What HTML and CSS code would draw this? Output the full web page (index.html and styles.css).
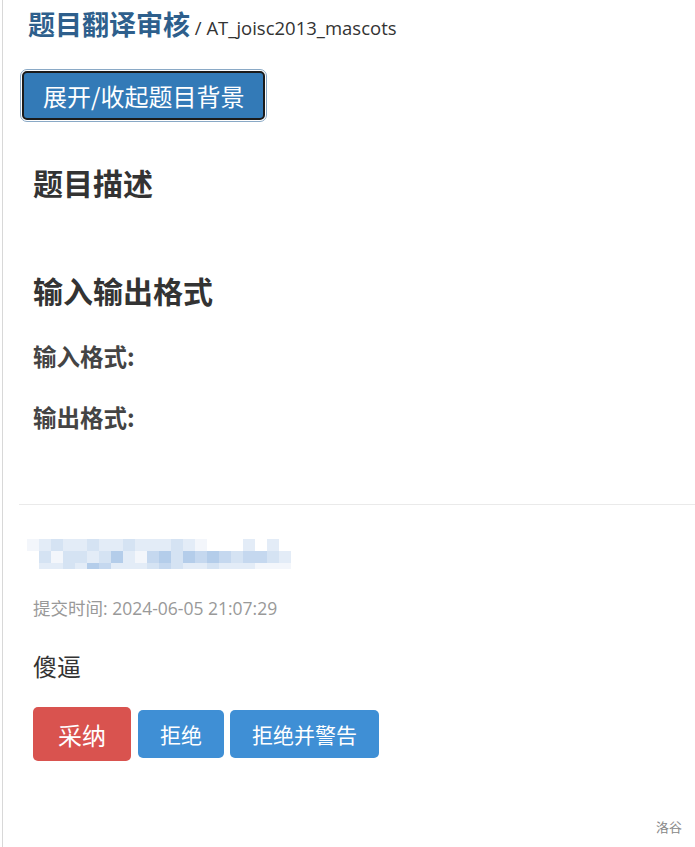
FILE: index.html
```html
<!DOCTYPE html>
<html lang="zh-CN">
<head>
<meta charset="utf-8">
<title>题目翻译审核</title>
<link rel="stylesheet" href="styles.css">
</head>
<body>
<div class="frame">
  <div class="page">
    <h1 class="title"><span class="title-main">题目翻译审核</span><span class="title-sub"> / AT_joisc2013_mascots</span></h1>

    <div class="toggle-wrap"><button class="toggle">展开/收起题目背景</button></div>

    <section class="problem">
      <h2 class="sec">题目描述</h2>
      <h2 class="sec sec-io">输入输出格式</h2>
      <h3 class="sub">输入格式:</h3>
      <h3 class="sub">输出格式:</h3>
    </section>

    <hr class="divider">

    <section class="submission">
      <div class="mosaic">
        <div class="mrow r1">
          <i class="a"></i><i class="b"></i><i class="c"></i><i class="b"></i><i class="b"></i><i class="c"></i><i class="b"></i><i class="b"></i><i class="c"></i><i class="b"></i><i class="b"></i><i class="b"></i><i class="c"></i><i class="b"></i><i class="a"></i><i class="w"></i><i class="w"></i><i class="w"></i><i class="b"></i><i class="w"></i><i class="b"></i><i class="w"></i>
        </div>
        <div class="mrow r2">
          <i class="w"></i><i class="c"></i><i class="a"></i><i class="c"></i><i class="c"></i><i class="b"></i><i class="c"></i><i class="e"></i><i class="b"></i><i class="a"></i><i class="d"></i><i class="e"></i><i class="c"></i><i class="e"></i><i class="d"></i><i class="e"></i><i class="d"></i><i class="c"></i><i class="d"></i><i class="d"></i><i class="c"></i><i class="b"></i>
        </div>
        <div class="mrow r3">
          <i class="w"></i><i class="b"></i><i class="b"></i><i class="c"></i><i class="b"></i><i class="e"></i><i class="d"></i><i class="b"></i><i class="b"></i><i class="b"></i><i class="c"></i><i class="d"></i><i class="c"></i><i class="b"></i><i class="b"></i><i class="c"></i><i class="b"></i><i class="b"></i><i class="b"></i><i class="a"></i><i class="a"></i><i class="a"></i>
        </div>
      </div>
      <p class="time">提交时间: 2024-06-05 21:07:29</p>
      <p class="content">傻逼</p>
      <div class="actions">
        <button class="btn btn-accept">采纳</button>
        <button class="btn btn-reject">拒绝</button>
        <button class="btn btn-reject">拒绝并警告</button>
      </div>
    </section>

    <footer class="footer">洛谷</footer>
  </div>
</div>
</body>
</html>
```

FILE: styles.css
```css
html, body {
  margin: 0;
  padding: 0;
  background: #fff;
}
body {
  font-family: "Open Sans", "Noto Sans CJK SC", "Noto Sans", sans-serif;
  color: #333;
}
.frame {
  margin-left: 2px;
  border-left: 1px solid #d8d8d8;
  min-height: 847px;
  box-sizing: border-box;
}
.page {
  padding-left: 16px;
  display: flex;
  flex-direction: column;
  min-height: 847px;
  box-sizing: border-box;
}
.title {
  margin: 3px 0 0 9px;
  font-weight: normal;
  line-height: 40px;
  height: 40px;
  white-space: nowrap;
}
.title-main {
  font-family: "Noto Sans CJK SC", sans-serif;
  font-size: 27px;
  font-weight: 700;
  color: #2e5f8c;
}
.title-sub {
  font-size: 18.5px;
  color: #333;
}
.toggle-wrap {
  margin-top: 28px;
  display: flex;
}
.toggle {
  font-family: "Noto Sans CJK SC", sans-serif;
  font-size: 24px;
  color: #fff;
  background: #337ab7;
  border: 2px solid #1b1b1b;
  border-radius: 5px;
  outline: 1px solid #8aa9c6;
  outline-offset: 1px;
  height: 49px;
  padding: 0 19px;
  line-height: 44px;
  margin-left: 3px;
}
.problem {
  padding-left: 14px;
}
.sec {
  font-family: "Noto Sans CJK SC", sans-serif;
  font-size: 30px;
  font-weight: 700;
  color: #333;
  margin: 0;
  line-height: 40px;
}
.problem .sec:first-child {
  margin-top: 42px;
}
.sec-io {
  margin-top: 68px !important;
}
.sub {
  font-family: "Noto Sans CJK SC", sans-serif;
  font-size: 23.5px;
  font-weight: 700;
  color: #444;
  margin: 31px 0 0;
  line-height: 30px;
}
.sub + .sub {
  margin-top: 31px;
}
.divider {
  border: 0;
  border-top: 1px solid #eaeaea;
  margin: 72px 0 0 0;
}
.submission {
  padding-left: 14px;
}
.mosaic {
  margin: 34px 0 0 -6px;
  display: flex;
  flex-direction: column;
}
.mrow {
  display: flex;
}
.mrow i {
  display: block;
  width: 12px;
  height: 12px;
}
.mrow.r3 i {
  height: 6px;
}
.mrow .a { background: #f3f6fb; }
.mrow .b { background: #e3ecf7; }
.mrow .c { background: #d5e3f3; }
.mrow .d { background: #c5d8ef; }
.mrow .e { background: #b4cdea; }
.mrow .w { background: transparent; }
.time {
  margin: 27px 0 0;
  font-size: 17.5px;
  color: #999;
  line-height: 24px;
  font-family: "Open Sans", "Noto Sans CJK SC", sans-serif;
}
.content {
  margin: 30px 0 0;
  font-family: "Noto Sans CJK SC", sans-serif;
  font-size: 24px;
  line-height: 32px;
  color: #333;
}
.actions {
  margin-top: 25px;
  display: flex;
  align-items: center;
  gap: 6px;
}
.btn {
  font-family: "Noto Sans CJK SC", sans-serif;
  color: #fff;
  border: 0;
  border-radius: 5px;
  padding: 0;
}
.btn-accept {
  background: #d9534f;
  width: 98px;
  height: 54px;
  font-size: 24px;
  margin-right: 1px;
}
.btn-reject {
  background: #3f8fd5;
  height: 48px;
  font-size: 21px;
  padding: 0 22px;
}
.footer {
  margin-top: auto;
  align-self: flex-end;
  font-family: "Noto Sans CJK SC", sans-serif;
  font-size: 13px;
  color: #888;
  padding: 0 13px 11px 0;
}
```
